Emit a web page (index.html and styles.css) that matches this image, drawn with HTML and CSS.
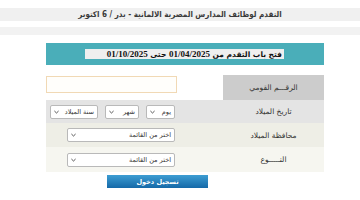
FILE: index.html
```html
<!DOCTYPE html>
<html lang="ar" dir="rtl">
<head>
<meta charset="utf-8">
<link rel="stylesheet" href="styles.css">
</head>
<body>
<div class="title"><span class="title-text">التقدم لوظائف المدارس المصرية الالمانية - بدر / 6 اكتوبر</span></div>
<div class="band"></div>
<div class="main">
  <div class="notice"><div class="notice-text">فتح باب التقدم من <span class="num">01/04/2025</span> حتى <span class="num">01/10/2025</span></div></div>
  <div class="form">
    <div class="row r1">
      <div class="label">الرقـــم القومي</div>
      <div class="field"><div class="input"></div></div>
    </div>
    <div class="row r2">
      <div class="label">تاريخ الميلاد</div>
      <div class="field">
        <div class="sel w-day"><span>يوم</span><svg class="chev" viewBox="0 0 6 4"><path d="M0.5 0.8 L3 3.2 L5.5 0.8" /></svg></div>
        <div class="sel w-month"><span>شهر</span><svg class="chev" viewBox="0 0 6 4"><path d="M0.5 0.8 L3 3.2 L5.5 0.8" /></svg></div>
        <div class="sel w-year"><span>سنة الميلاد</span><svg class="chev" viewBox="0 0 6 4"><path d="M0.5 0.8 L3 3.2 L5.5 0.8" /></svg></div>
      </div>
    </div>
    <div class="row r3">
      <div class="label">محافظة الميلاد</div>
      <div class="field"><div class="sel w-list"><span>اختر من القائمة</span><svg class="chev" viewBox="0 0 6 4"><path d="M0.5 0.8 L3 3.2 L5.5 0.8" /></svg></div></div>
    </div>
    <div class="row r4">
      <div class="label">النـــــوع</div>
      <div class="field"><div class="sel w-list"><span>اختر من القائمة</span><svg class="chev" viewBox="0 0 6 4"><path d="M0.5 0.8 L3 3.2 L5.5 0.8" /></svg></div></div>
    </div>
  </div>
  <div class="actions"><div class="btn">تسجيل دخول</div></div>
</div>
</body>
</html>
```
FILE: styles.css
```css
html, body { margin: 0; padding: 0; background: #ffffff; }
body {
  direction: rtl;
  font-family: "DejaVu Sans", "Liberation Sans", sans-serif;
  color: #333;
  width: 360px;
  height: 200px;
  overflow: hidden;
}
.title {
  margin-top: 8px;
  height: 13px;
  background: #f0f0f0;
  display: flex;
  justify-content: center;
  align-items: center;
}
.title-text {
  font-family: "DejaVu Sans Condensed", "DejaVu Sans", sans-serif;
  font-size: 8px;
  font-weight: bold;
  color: #3a3a3a;
  white-space: nowrap;
}
.band {
  margin-top: 6px;
  height: 8px;
  background: #f2f2f2;
}
.main {
  width: 278px;
  margin: 8px 36px 0 46px;
}
.notice {
  height: 22px;
  background: #4aaeb9;
  display: flex;
  align-items: flex-start;
  padding-top: 6px;
  padding-right: 40px;
  box-sizing: border-box;
}
.notice-text {
  width: 199px;
  height: 10px;
  background: #efefef;
  font-size: 7.5px;
  line-height: 10px;
  font-weight: bold;
  color: #111;
  padding-right: 2px;
  box-sizing: border-box;
  white-space: nowrap;
  overflow: hidden;
}
.notice-text .num {
  font-family: "Liberation Serif", serif;
  font-size: 9px;
}
.form {
  margin-top: 10px;
}
.row {
  display: flex;
}
.r1 { height: 25px; }
.r2 { height: 23px; background: #e4e4e4; }
.r3 { height: 24px; background: #eeeee6; }
.r4 { height: 25px; background: #f6f6f0; }
.label {
  width: 101px;
  display: flex;
  align-items: center;
  justify-content: center;
  font-size: 7.5px;
  color: #333;
}
.r1 .label { background: #cccccc; }
.field {
  flex: 1;
  display: flex;
  align-items: center;
  gap: 7px;
  padding-right: 48px;
}
.r1 .field { background: #ffffff; align-items: flex-start; padding-right: 46px; }
.input {
  width: 131px;
  height: 17px;
  margin-top: 1px;
  box-sizing: border-box;
  border: 1px solid #f1d9b5;
  background: #fffefb;
}
.sel {
  height: 14px;
  box-sizing: border-box;
  border: 1px solid #b9b9b9;
  border-radius: 2px;
  background: #ffffff;
  display: flex;
  align-items: center;
  justify-content: space-between;
  padding: 0 3px 0 3px;
  font-size: 6.5px;
  color: #333;
  white-space: nowrap;
}
.r2 .sel { margin-top: 1px; }
.w-day { width: 29px; }
.w-month { width: 34px; }
.w-year { width: 48px; }
.w-list { width: 108px; }
.chev {
  width: 5px;
  height: 4px;
  fill: none;
  stroke: #444;
  stroke-width: 1.1;
}
.actions {
  display: flex;
  margin-top: 3px;
  padding-right: 116px;
}
.btn {
  width: 101px;
  height: 13px;
  background: linear-gradient(#3d9dd2, #1569a8);
  color: #fff;
  font-size: 6.5px;
  font-weight: bold;
  display: flex;
  align-items: center;
  justify-content: center;
}
```
